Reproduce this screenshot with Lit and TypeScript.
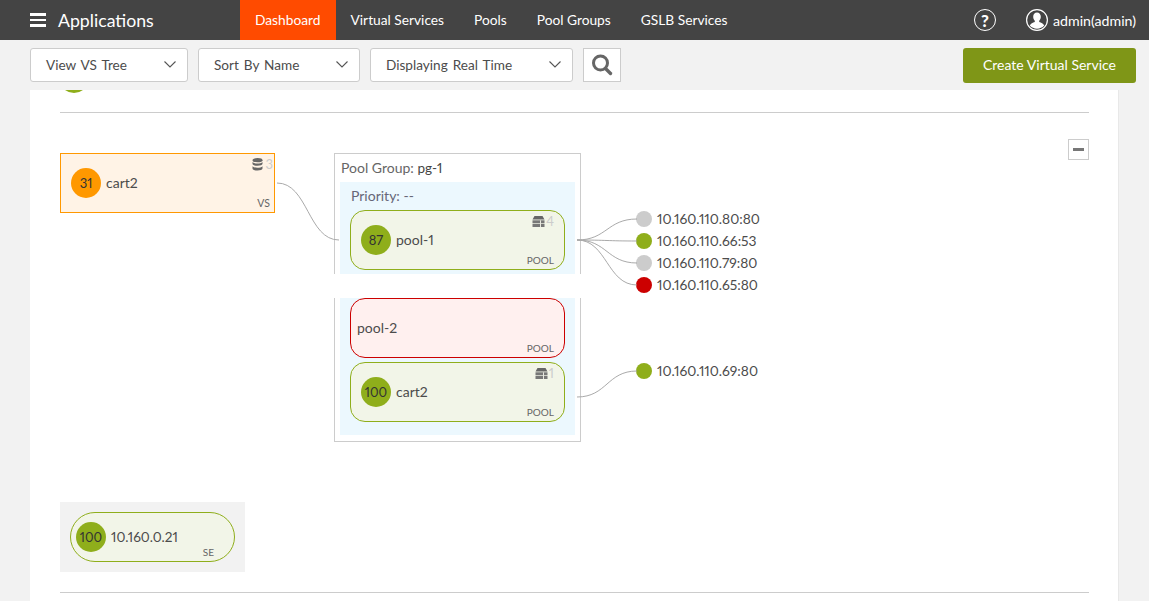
import { LitElement, html, css, svg } from 'lit';
import { customElement } from 'lit/decorators.js';

const curve = (x1: number, y1: number, x2: number, y2: number) => {
    const mid = (x1 + x2) / 2;
    return svg`<path d="M${x1} ${y1} C${mid} ${y1} ${mid} ${y2} ${x2} ${y2}"></path>`;
};

const chevron = html`
    <svg class="chevron" width="12" height="7" viewBox="0 0 12 7">
        <path d="M.5 .5l5.500 5.500 5.500-5.500" fill="none" stroke="#555" stroke-width="1.100"></path>
    </svg>
`;

const dbIcon = html`
    <svg width="11" height="13" viewBox="0 0 11 13">
        <ellipse cx="5.500" cy="2.200" rx="5" ry="2.100" fill="#666"></ellipse>
        <path d="M.5 4v1.800c0 1.200 2.200 2 5 2s5-.8 5-2V4c-1 1-3 1.500-5 1.500S1.500 5 .5 4z" fill="#666"></path>
        <path d="M.5 8.200v2.300c0 1.200 2.200 2 5 2s5-.8 5-2V8.200c-1 1-3 1.500-5 1.500s-4-.5-5-1.500z" fill="#666"></path>
    </svg>
`;

const poolIcon = html`
    <svg width="13" height="11" viewBox="0 0 13 11">
        <path d="M2.500 0h8l2 3.500H.5z" fill="#666"></path>
        <rect x=".5" y="4.300" width="12" height="3" fill="#777"></rect>
        <rect x=".5" y="8" width="12" height="3" fill="#777"></rect>
        <rect x="8" y="4.300" width="1" height="6.700" fill="#e8e8e0"></rect>
    </svg>
`;

@customElement('app-root')
export class AppRoot extends LitElement {
    static styles = css`
        :host {
            display: block;
            height: 601px;
            overflow: hidden;
            background: #f2f2f2;
            font-family: Lato, 'Liberation Sans', sans-serif;
            font-variant-numeric: proportional-nums;
            color: #4c4c4c;
        }

        .header {
            display: flex;
            align-items: stretch;
            height: 40px;
            background: #444;
            color: #fff;
        }

        .brand {
            display: flex;
            align-items: center;
            gap: 12px;
            width: 240px;
            padding-left: 30px;
            box-sizing: border-box;
            font-size: 17.700px;
        }

        .burger {
            display: flex;
            flex-direction: column;
            gap: 3px;
            width: 16px;
        }

        .burger span {
            height: 2.600px;
            background: #fff;
        }

        .nav {
            display: flex;
        }

        .nav a {
            display: flex;
            align-items: center;
            padding: 0 15px 2px;
            font-size: 13.750px;
        }

        .nav a.active {
            background: #ff4b00;
        }

        .user {
            display: flex;
            align-items: center;
            margin-left: auto;
            padding-right: 13px;
            font-size: 14.200px;
        }

        .help {
            display: flex;
            align-items: center;
            justify-content: center;
            width: 22px;
            height: 22px;
            box-sizing: border-box;
            margin-right: 30px;
            border: 1.200px solid #fff;
            border-radius: 50%;
            font-size: 17px;
            font-weight: 900;
        }

        .avatar {
            margin-right: 5px;
        }

        .toolbar {
            display: flex;
            align-items: flex-start;
            gap: 10px;
            height: 50px;
            padding: 8px 13px 0 30px;
            box-sizing: border-box;
        }

        .select {
            display: flex;
            align-items: center;
            justify-content: space-between;
            height: 34px;
            padding: 0 11px 1px 15px;
            box-sizing: border-box;
            background: #fff;
            border: 1px solid #ccc;
            border-radius: 3px;
            font-size: 13.600px;
            word-spacing: 1.500px;
        }

        .search {
            display: flex;
            align-items: center;
            justify-content: center;
            width: 38px;
            height: 34px;
            box-sizing: border-box;
            background: #fff;
            border: 1px solid #ccc;
        }

        .create {
            display: flex;
            align-items: center;
            justify-content: center;
            width: 173px;
            height: 35px;
            padding-bottom: 2px;
            box-sizing: border-box;
            margin-left: auto;
            background: #7f9617;
            border-radius: 3px;
            color: #fff;
            font-size: 14px;
        }

        .panel {
            position: relative;
            height: 511px;
            margin: 0 30px;
            background: #fff;
            border-right: 1px solid #e8e8e8;
            overflow: hidden;
        }

        .rule {
            position: absolute;
            left: 30px;
            right: 29px;
            height: 1px;
            background: #ccc;
        }

        .peek {
            position: absolute;
            left: 29px;
            top: -27px;
            width: 30px;
            height: 30px;
            border-radius: 50%;
            background: #8fae1b;
        }

        .links {
            position: absolute;
            left: -30px;
            top: -90px;
            width: 1149px;
            height: 601px;
            fill: none;
            stroke: #aaa;
            stroke-width: 1;
            z-index: 2;
            pointer-events: none;
        }

        .collapse {
            position: absolute;
            left: 1038px;
            top: 49px;
            display: flex;
            align-items: center;
            justify-content: center;
            width: 21px;
            height: 21px;
            box-sizing: border-box;
            border: 1px solid #ccc;
        }

        .collapse span {
            width: 11px;
            height: 2.500px;
            background: #777;
        }

        .node {
            position: relative;
            display: flex;
            align-items: center;
            gap: 5px;
            width: 215px;
            height: 60px;
            padding-left: 10px;
            padding-bottom: 1px;
            box-sizing: border-box;
            font-size: 14px;
        }

        .node.vs {
            position: absolute;
            left: 30px;
            top: 63px;
            background: #fff3e6;
            border: 1px solid #ff9800;
        }

        .node.pool {
            background: #f2f5e8;
            border: 1px solid #8fae1b;
            border-radius: 15px;
        }

        .node.down {
            padding-left: 6px;
            background: #fff0ef;
            border-color: #cc0000;
        }

        .score {
            display: flex;
            align-items: center;
            justify-content: center;
            width: 30px;
            height: 30px;
            border-radius: 50%;
            background: #8fae1b;
            color: #333;
            font-size: 13px;
        }

        .vs .score {
            background: #ff9800;
        }

        .kind {
            position: absolute;
            right: 10px;
            bottom: 3px;
            color: #666;
            font-size: 10px;
            line-height: 12px;
        }

        .vs .kind {
            right: 4px;
            font-size: 10.500px;
        }

        .count {
            position: absolute;
            right: 10px;
            top: 3px;
            display: flex;
            align-items: center;
            gap: 1px;
            color: #ccc;
            font-size: 13px;
            line-height: 15px;
        }

        .vs .count {
            right: 1px;
            gap: 3px;
        }

        .group {
            position: absolute;
            left: 304px;
            top: 63px;
            width: 247px;
        }

        .group-top,
        .group-bottom {
            box-sizing: border-box;
            border: 1px solid #ccc;
            padding: 0 5px;
        }

        .group-top {
            height: 121px;
            border-bottom: 0;
        }

        .group-bottom {
            height: 144px;
            margin-top: 24px;
            border-top: 0;
            padding-bottom: 6px;
        }

        .group-title {
            height: 28px;
            padding-left: 1px;
            line-height: 28px;
            font-size: 14px;
            color: #666;
        }

        .group-title b {
            font-size: 13.500px;
            font-weight: 400;
            color: #444;
        }

        .priority {
            height: 92px;
            padding: 0 10px;
            box-sizing: border-box;
            background: #ecf8fe;
        }

        .priority-title {
            height: 28px;
            padding-left: 1px;
            line-height: 28px;
            font-size: 14px;
            color: #667;
        }

        .group-bottom .priority {
            display: flex;
            flex-direction: column;
            gap: 4px;
            height: 137px;
        }

        .server {
            position: absolute;
            left: 606px;
            display: flex;
            align-items: center;
            gap: 5px;
            height: 16px;
            font-size: 13.800px;
            white-space: nowrap;
        }

        .server i {
            width: 16px;
            height: 16px;
            border-radius: 50%;
        }

        .server span {
            padding-bottom: 1px;
        }

        .se-wrap {
            position: absolute;
            left: 30px;
            top: 412px;
            width: 185px;
            height: 70px;
            padding: 10px;
            box-sizing: border-box;
            background: #f2f2f2;
        }

        .se {
            position: relative;
            display: flex;
            align-items: center;
            gap: 5px;
            height: 50px;
            padding-left: 5px;
            padding-bottom: 1px;
            box-sizing: border-box;
            background: #f2f5e8;
            border: 1px solid #8fae1b;
            border-radius: 25px;
            font-size: 13.600px;
        }

        .se .kind {
            right: 20px;
        }
    `;

    private servers = [
        { ip: '10.160.110.80:80', color: '#cccccc', y: 121 },
        { ip: '10.160.110.66:53', color: '#8fae1b', y: 143 },
        { ip: '10.160.110.79:80', color: '#cccccc', y: 165 },
        { ip: '10.160.110.65:80', color: '#cc0000', y: 187 },
        { ip: '10.160.110.69:80', color: '#8fae1b', y: 273 },
    ];

    render() {
        return html`
            <div class="header">
                <div class="brand">
                    <div class="burger"><span></span><span></span><span></span></div>
                    Applications
                </div>
                <div class="nav">
                    <a class="active">Dashboard</a>
                    <a>Virtual Services</a>
                    <a>Pools</a>
                    <a>Pool Groups</a>
                    <a>GSLB Services</a>
                </div>
                <div class="user">
                    <span class="help">?</span>
                    <svg class="avatar" width="22" height="22" viewBox="0 0 22 22">
                        <circle cx="11" cy="11" r="10.400" fill="none" stroke="#fff" stroke-width="1.200"></circle>
                        <path d="M11 3.500c2.300 0 3.800 1.800 3.800 4.300 0 1.700-.7 3.200-1.600 4v1.300c2 .8 4.200 1.500 5 3.400a9.800 9.800 0 0 1-14.400 0c.8-1.900 3-2.600 5-3.400v-1.300c-.9-.8-1.600-2.300-1.600-4 0-2.500 1.500-4.300 3.800-4.300z" fill="#fff"></path>
                    </svg>
                    admin(admin)
                </div>
            </div>

            <div class="toolbar">
                <div class="select" style="width:158px">View VS Tree ${chevron}</div>
                <div class="select" style="width:162px">Sort By Name ${chevron}</div>
                <div class="select" style="width:203px">Displaying Real Time ${chevron}</div>
                <div class="search">
                    <svg width="22" height="22" viewBox="0 0 22 22">
                        <circle cx="9.500" cy="9" r="7" fill="none" stroke="#666" stroke-width="3"></circle>
                        <path d="M14.500 14.500l5 5" stroke="#666" stroke-width="3.400" stroke-linecap="round"></path>
                    </svg>
                </div>
                <div class="create">Create Virtual Service</div>
            </div>

            <div class="panel">
                <div class="peek"></div>
                <div class="rule" style="top:22px"></div>
                <div class="rule" style="top:502px"></div>
                <div class="collapse"><span></span></div>

                <div class="node vs">
                    <span class="score">31</span>cart2
                    <span class="count">${dbIcon}3</span>
                    <span class="kind">VS</span>
                </div>

                <div class="group">
                    <div class="group-top">
                        <div class="group-title">Pool Group: <b>pg-1</b></div>
                        <div class="priority">
                            <div class="priority-title">Priority: --</div>
                            <div class="node pool">
                                <span class="score">87</span>pool-1
                                <span class="count">${poolIcon}4</span>
                                <span class="kind">POOL</span>
                            </div>
                        </div>
                    </div>
                    <div class="group-bottom">
                        <div class="priority">
                            <div class="node pool down">
                                pool-2
                                <span class="kind">POOL</span>
                            </div>
                            <div class="node pool">
                                <span class="score">100</span>cart2
                                <span class="count">${poolIcon}1</span>
                                <span class="kind">POOL</span>
                            </div>
                        </div>
                    </div>
                </div>

                ${this.servers.map(
                    (s) => html`
                        <div class="server" style="top:${s.y}px">
                            <i style="background:${s.color}"></i><span>${s.ip}</span>
                        </div>
                    `
                )}

                <div class="se-wrap">
                    <div class="se">
                        <span class="score">100</span>10.160.0.21
                        <span class="kind">SE</span>
                    </div>
                </div>

                <svg class="links" viewBox="0 0 1149 601">
                    ${curve(277, 183, 339, 240)}
                    ${curve(577, 240, 637, 219)}
                    ${curve(577, 240, 637, 241)}
                    ${curve(577, 240, 637, 263)}
                    ${curve(577, 240, 637, 285)}
                    ${curve(577, 397, 637, 371)}
                </svg>
            </div>
        `;
    }
}
